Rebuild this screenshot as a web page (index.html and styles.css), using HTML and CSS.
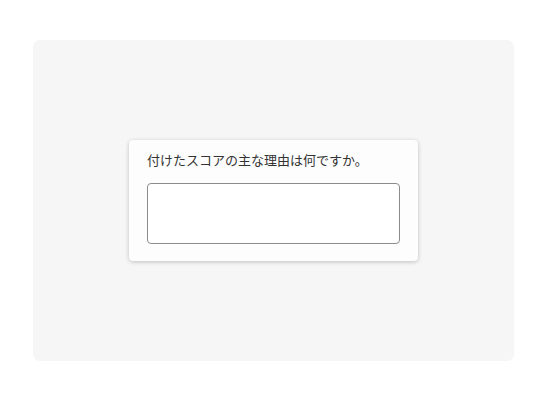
FILE: index.html
```html
<!DOCTYPE html>
<html lang="ja">
<head>
  <meta charset="UTF-8" />
  <meta name="viewport" content="width=device-width, initial-scale=1.0"/>
  <title>アンケート</title>
  <link rel="stylesheet" href="styles.css">
</head>
<body>

  <div class="stage">
    <form class="card">
      <label class="question" for="reason">付けたスコアの主な理由は何ですか。</label>
      <textarea id="reason" class="answer"></textarea>
    </form>
  </div>

</body>
</html>
```

FILE: styles.css
```css
body {
  margin: 0;
  height: 400px;
  background: #ffffff;
  font-family: "Noto Sans CJK JP", "Noto Sans", sans-serif;
  display: flex;
  justify-content: center;
  align-items: center;
}

.stage {
  width: 481px;
  height: 321px;
  background: #f6f6f6;
  border-radius: 7px;
  display: flex;
  justify-content: center;
  align-items: center;
}

.card {
  width: 289px;
  box-sizing: border-box;
  padding: 10px 18px 17px;
  background: #fdfdfd;
  border-radius: 4px;
  box-shadow: 0 1px 4px rgba(0, 0, 0, 0.22);
  display: flex;
  flex-direction: column;
}

.question {
  font-size: 13px;
  line-height: 20px;
  color: #333333;
  margin-bottom: 13px;
}

.answer {
  box-sizing: border-box;
  width: 100%;
  height: 61px;
  margin: 0;
  padding: 6px 8px;
  border: 1px solid #8c8c8c;
  border-radius: 4px;
  background: #ffffff;
  resize: none;
  font-family: inherit;
  font-size: 13px;
}
```
